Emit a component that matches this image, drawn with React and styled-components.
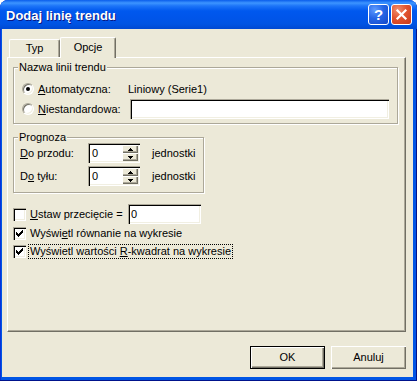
import React from 'react';
import styled, { createGlobalStyle, css } from 'styled-components';

const FACE = '#ECE9D8';
const SHADOW = '#ACA899';
const DARK = '#716F64';
const LIGHT = '#F1EFE2';

const Global = createGlobalStyle`
  html, body { margin: 0; padding: 0; background: #ffffff; }
  body { width: 417px; height: 381px; overflow: hidden; }
`;

const Window = styled.div`
  width: 417px;
  height: 381px;
  display: flex;
  flex-direction: column;
  background: #0055E5;
  border-radius: 8px 8px 0 0;
  overflow: hidden;
  box-shadow: inset -1px -1px 0 #00138C, inset 1px 0 0 #0831D9;
  font-family: "Liberation Sans", Arial, sans-serif;
  font-size: 11px;
  line-height: 13px;
  color: #000;
`;

const TitleBar = styled.div`
  flex: none;
  height: 29px;
  display: flex;
  align-items: center;
  padding: 0 5px 0 6px;
  background: linear-gradient(180deg, #0A5DEB 0px, #3D95FF 3px, #1C74F8 6px, #0058EE 11px, #0055EA 18px, #0054E3 24px, #0049D2 29px);
`;

const Title = styled.div`
  flex: 1;
  color: #fff;
  font-weight: bold;
  font-size: 13px;
  text-shadow: 1px 1px 0 #0A1883;
  white-space: nowrap;
  padding-top: 1px;
`;

const Caps = styled.div`
  display: flex;
  gap: 2px;
`;

const CapButton = styled.div`
  width: 21px;
  height: 21px;
  box-sizing: border-box;
  border: 1px solid #fff;
  border-radius: 3px;
  display: flex;
  align-items: center;
  justify-content: center;
  color: #fff;
  font-weight: bold;
  font-size: 15px;
  ${(p) =>
    p.$kind === 'close'
      ? css`
          background: radial-gradient(circle at 30% 25%, #F08E6E 0%, #E1542F 45%, #C8381A 100%);
        `
      : css`
          background: radial-gradient(circle at 30% 25%, #5E9BFF 0%, #2666E6 45%, #1247C9 100%);
        `}
`;

const Body = styled.div`
  flex: 1;
  margin: 0 4px 4px 2px;
  background: ${FACE};
  padding: 8px 7px 0 5px;
  display: flex;
  flex-direction: column;
`;

const TabStrip = styled.div`
  display: flex;
  align-items: flex-end;
  height: 20px;
  padding-left: 2px;
  position: relative;
  z-index: 1;
`;

const Tab = styled.div`
  box-sizing: border-box;
  display: flex;
  align-items: center;
  justify-content: center;
  background: ${FACE};
  border-top: 1px solid #fff;
  border-left: 1px solid #fff;
  border-right: 1px solid ${DARK};
  border-radius: 2px 2px 0 0;
  box-shadow: inset -1px 0 0 ${SHADOW};
  width: ${(p) => p.$w}px;
  height: ${(p) => (p.$active ? 21 : 18)}px;
  margin-bottom: ${(p) => (p.$active ? -1 : 0)}px;
  padding-bottom: ${(p) => (p.$active ? 2 : 0)}px;
`;

const Panel = styled.div`
  flex: none;
  box-sizing: border-box;
  width: 399px;
  height: 275px;
  border-top: 1px solid #fff;
  border-left: 1px solid #fff;
  border-right: 1px solid ${DARK};
  border-bottom: 1px solid ${DARK};
  box-shadow: inset -1px -1px 0 ${SHADOW};
  padding: 9px 0 0 5px;
  display: flex;
  flex-direction: column;
`;

const Group = styled.div`
  position: relative;
  box-sizing: border-box;
  width: ${(p) => p.$w}px;
  height: ${(p) => p.$h}px;
  margin-bottom: ${(p) => p.$mb || 0}px;
  border: 1px solid ${SHADOW};
  box-shadow: inset 1px 1px 0 #fff, 1px 1px 0 #fff;
  padding: ${(p) => p.$pad};
`;

const Legend = styled.div`
  position: absolute;
  top: -8px;
  left: 4px;
  line-height: 14px;
  padding: 0 1px;
  background: ${FACE};
  white-space: nowrap;
`;

const NameGrid = styled.div`
  display: grid;
  grid-template-columns: 106px 1fr;
  grid-auto-rows: 20px;
  align-items: center;
`;

const ForecastGrid = styled.div`
  display: grid;
  grid-template-columns: 68px 52px auto;
  grid-auto-rows: 20px;
  row-gap: 3px;
  align-items: center;
`;

const RadioLabel = styled.div`
  display: flex;
  align-items: center;
  gap: 4px;
  white-space: nowrap;
`;

const Radio = styled.span`
  flex: none;
  position: relative;
  width: 12px;
  height: 12px;
  box-sizing: border-box;
  border-radius: 50%;
  border: 1px solid;
  border-color: ${SHADOW} #fff #fff ${SHADOW};
  background: #fff;
  box-shadow: inset 1px 1px 0 ${DARK}, inset -1px -1px 0 ${LIGHT};
  ${(p) =>
    p.$on &&
    css`
      &::after {
        content: '';
        position: absolute;
        left: 3px;
        top: 3px;
        width: 4px;
        height: 4px;
        border-radius: 50%;
        background: #000;
      }
    `}
`;

const Sunken = css`
  box-sizing: border-box;
  background: #fff;
  box-shadow: inset 1px 1px 0 ${SHADOW}, inset 2px 2px 0 #000, inset -1px -1px 0 #fff, inset -2px -2px 0 ${LIGHT};
`;

const TextBox = styled.div`
  ${Sunken};
  width: ${(p) => p.$w}px;
  height: 20px;
  margin-left: ${(p) => p.$ml || 0}px;
  padding: 3px 0 0 3px;
  line-height: 14px;
`;

const SpinBox = styled.div`
  ${Sunken};
  width: 52px;
  height: 20px;
  display: flex;
  align-items: stretch;
  padding: 2px 2px 2px 4px;
`;

const SpinValue = styled.div`
  flex: 1;
  line-height: 16px;
`;

const Spinner = styled.div`
  width: 16px;
  display: flex;
  flex-direction: column;
`;

const SpinHalf = styled.div`
  flex: 1;
  background: ${FACE};
  display: flex;
  align-items: center;
  justify-content: center;
  box-shadow: inset 1px 1px 0 #fff, inset -1px -1px 0 ${DARK}, inset -2px -2px 0 ${SHADOW};
`;

const Unit = styled.div`
  margin-left: 12px;
`;

const U = styled.span`
  text-decoration: underline;
  text-underline-offset: 1px;
`;

const CheckRow = styled.div`
  display: flex;
  align-items: center;
  height: ${(p) => p.$h}px;
  margin-top: ${(p) => p.$mt || 0}px;
`;

const Box = styled.span`
  ${Sunken};
  flex: none;
  width: 13px;
  height: 13px;
  display: flex;
  align-items: center;
  justify-content: center;
`;

const CheckText = styled.span`
  margin-left: 2px;
  padding: 0 1px;
  line-height: 13px;
  border: 1px ${(p) => (p.$focus ? 'dotted #000' : 'solid transparent')};
  white-space: nowrap;
  width: ${(p) => (p.$w ? `${p.$w}px` : 'auto')};
  box-sizing: border-box;
`;

const ButtonRow = styled.div`
  display: flex;
  justify-content: flex-end;
  gap: 6px;
  margin-top: 14px;
`;

const Button = styled.div`
  box-sizing: border-box;
  width: 75px;
  height: 23px;
  display: flex;
  align-items: center;
  justify-content: center;
  background: ${FACE};
  border: 1px solid ${(p) => (p.$default ? '#000' : 'transparent')};
  box-shadow: ${(p) =>
    p.$default
      ? `inset 1px 1px 0 #fff, inset -1px -1px 0 ${DARK}, inset -2px -2px 0 ${SHADOW}`
      : `inset 1px 1px 0 #fff, inset -1px -1px 0 ${DARK}, inset -2px -2px 0 ${SHADOW}`};
  ${(p) => !p.$default && css`border: none;`}
`;

const CHECK = ['......#', '.....##', '#...###', '##.###.', '#####..', '.###...', '..#....'];

function CheckMark() {
  return (
    <svg width="7" height="7" viewBox="0 0 7 7" shapeRendering="crispEdges">
      {CHECK.flatMap((row, y) =>
        [...row].map((c, x) =>
          c === '#' ? <rect key={`${x}-${y}`} x={x} y={y} width="1" height="1" fill="#000" /> : null
        )
      )}
    </svg>
  );
}

function Arrow({ down }) {
  return (
    <svg width="5" height="3" viewBox="0 0 5 3" shapeRendering="crispEdges">
      {down ? (
        <>
          <rect x="0" y="0" width="5" height="1" fill="#000" />
          <rect x="1" y="1" width="3" height="1" fill="#000" />
          <rect x="2" y="2" width="1" height="1" fill="#000" />
        </>
      ) : (
        <>
          <rect x="2" y="0" width="1" height="1" fill="#000" />
          <rect x="1" y="1" width="3" height="1" fill="#000" />
          <rect x="0" y="2" width="5" height="1" fill="#000" />
        </>
      )}
    </svg>
  );
}

function Spin({ value }) {
  return (
    <SpinBox>
      <SpinValue>{value}</SpinValue>
      <Spinner>
        <SpinHalf>
          <Arrow />
        </SpinHalf>
        <SpinHalf>
          <Arrow down />
        </SpinHalf>
      </Spinner>
    </SpinBox>
  );
}

function Check({ on }) {
  return <Box>{on && <CheckMark />}</Box>;
}

export default function App() {
  return (
    <>
      <Global />
      <Window>
        <TitleBar>
          <Title>Dodaj linię trendu</Title>
          <Caps>
            <CapButton $kind="help">?</CapButton>
            <CapButton $kind="close">
              <svg width="13" height="13" viewBox="0 0 13 13">
                <path d="M2.5 2.5 L10.5 10.5 M10.5 2.5 L2.5 10.5" stroke="#fff" strokeWidth="2.2" strokeLinecap="square" />
              </svg>
            </CapButton>
          </Caps>
        </TitleBar>
        <Body>
          <TabStrip>
            <Tab $w={51}>Typ</Tab>
            <Tab $w={56} $active>
              Opcje
            </Tab>
          </TabStrip>
          <Panel>
            <Group $w={385} $h={57} $mb={13} $pad="11px 0 0 8px">
              <Legend>Nazwa linii trendu</Legend>
              <NameGrid>
                <RadioLabel>
                  <Radio $on />
                  <span>
                    <U>A</U>utomatyczna:
                  </span>
                </RadioLabel>
                <div>Liniowy (Serie1)</div>
                <RadioLabel>
                  <Radio />
                  <span>
                    <U>N</U>iestandardowa:
                  </span>
                </RadioLabel>
                <TextBox $w={259} $ml={2} />
              </NameGrid>
            </Group>
            <Group $w={191} $h={56} $pad="5px 0 0 6px">
              <Legend>Prognoza</Legend>
              <ForecastGrid>
                <div>
                  <U>D</U>o przodu:
                </div>
                <Spin value="0" />
                <Unit>jednostki</Unit>
                <div>
                  D<U>o</U> tyłu:
                </div>
                <Spin value="0" />
                <Unit>jednostki</Unit>
              </ForecastGrid>
            </Group>
            <CheckRow $h={20} $mt={11}>
              <Check />
              <CheckText $w={100}>
                <U>U</U>staw przecięcie =
              </CheckText>
              <TextBox $w={73}>0</TextBox>
            </CheckRow>
            <CheckRow $h={18}>
              <Check on />
              <CheckText>
                Wyświ<U>e</U>tl równanie na wykresie
              </CheckText>
            </CheckRow>
            <CheckRow $h={18}>
              <Check on />
              <CheckText $focus>
                Wyświetl wartości <U>R</U>-kwadrat na wykresie
              </CheckText>
            </CheckRow>
          </Panel>
          <ButtonRow>
            <Button $default>OK</Button>
            <Button>Anuluj</Button>
          </ButtonRow>
        </Body>
      </Window>
    </>
  );
}
